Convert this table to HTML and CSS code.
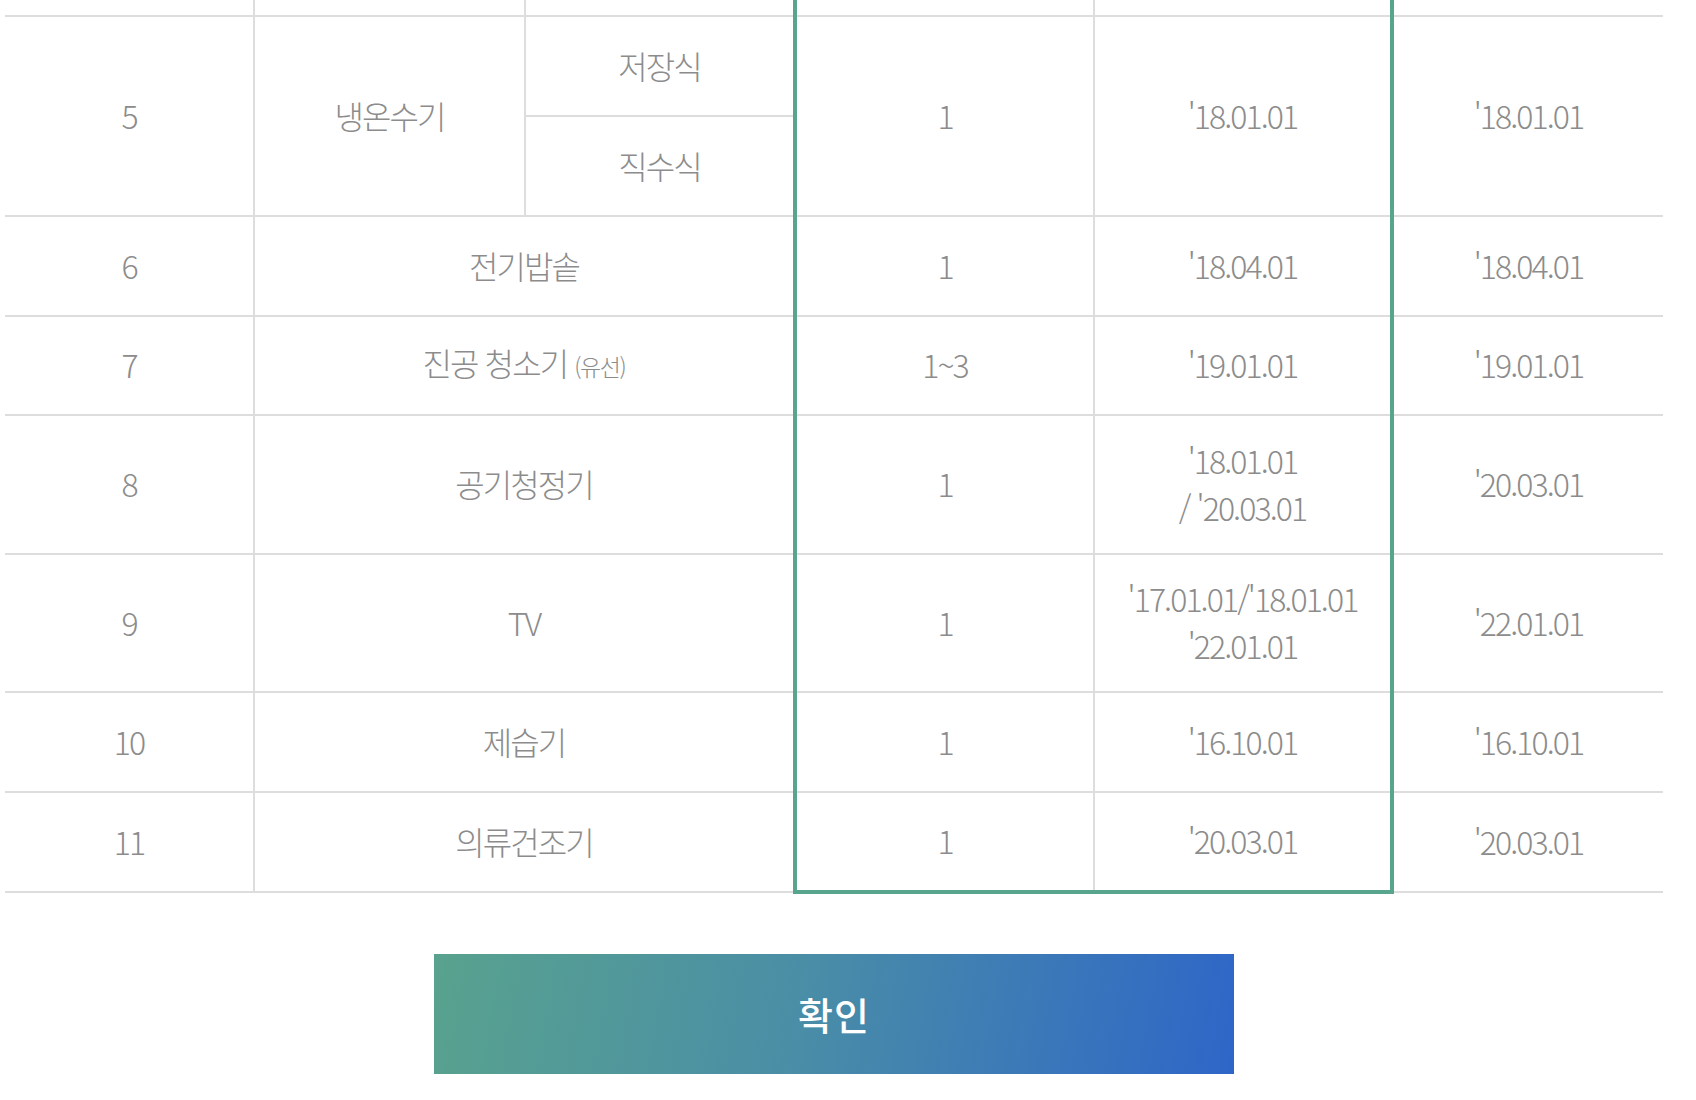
FILE: index.html
```html
<!DOCTYPE html>
<html lang="ko">
<head>
<meta charset="utf-8">
<title>가전제품 확인</title>
<link rel="stylesheet" href="styles.css">
</head>
<body>
<div class="page">
  <table class="spec">
    <colgroup>
      <col class="c-no"><col class="c-name"><col class="c-sub"><col class="c-qty"><col class="c-d1"><col class="c-d2">
    </colgroup>
    <tbody>
      <tr class="r-cut">
        <td class="first"></td><td></td><td></td><td class="qty"></td><td class="d1"></td><td class="last"></td>
      </tr>
      <tr class="r-100">
        <td class="first" rowspan="2">5</td>
        <td rowspan="2">냉온수기</td>
        <td>저장식</td>
        <td class="qty" rowspan="2">1</td>
        <td class="d1" rowspan="2">'18.01.01</td>
        <td class="last" rowspan="2">'18.01.01</td>
      </tr>
      <tr class="r-100">
        <td>직수식</td>
      </tr>
      <tr class="r-100">
        <td class="first">6</td>
        <td colspan="2">전기밥솥</td>
        <td class="qty">1</td>
        <td class="d1">'18.04.01</td>
        <td class="last">'18.04.01</td>
      </tr>
      <tr class="r-99">
        <td class="first">7</td>
        <td colspan="2">진공 청소기 <span class="small">(유선)</span></td>
        <td class="qty">1~3</td>
        <td class="d1">'19.01.01</td>
        <td class="last">'19.01.01</td>
      </tr>
      <tr class="r-139">
        <td class="first">8</td>
        <td colspan="2">공기청정기</td>
        <td class="qty">1</td>
        <td class="d1">'18.01.01<br>/ '20.03.01</td>
        <td class="last">'20.03.01</td>
      </tr>
      <tr class="r-138">
        <td class="first">9</td>
        <td colspan="2">TV</td>
        <td class="qty">1</td>
        <td class="d1">'17.01.01/'18.01.01<br>'22.01.01</td>
        <td class="last">'22.01.01</td>
      </tr>
      <tr class="r-100">
        <td class="first">10</td>
        <td colspan="2">제습기</td>
        <td class="qty">1</td>
        <td class="d1">'16.10.01</td>
        <td class="last">'16.10.01</td>
      </tr>
      <tr class="r-100 r-end">
        <td class="first">11</td>
        <td colspan="2">의류건조기</td>
        <td class="qty">1</td>
        <td class="d1">'20.03.01</td>
        <td class="last">'20.03.01</td>
      </tr>
    </tbody>
  </table>
  <button class="confirm" type="button">확인</button>
</div>
</body>
</html>
```
FILE: styles.css
```css
html, body {
  margin: 0;
  padding: 0;
  background: #fff;
}

.page {
  width: 1658px;
  margin-left: 5px;
  font-family: "Noto Sans CJK KR", "Noto Sans", sans-serif;
}

.spec {
  width: 100%;
  table-layout: fixed;
  border-collapse: collapse;
  border: none;
}

.c-no { width: 249px; }
.c-name { width: 271px; }
.c-sub { width: 270px; }
.c-qty { width: 299px; }
.c-d1 { width: 298px; }
.c-d2 { width: 271px; }

.spec td {
  border: 2px solid #dddddd;
  padding: 0 4px 2px;
  text-align: center;
  vertical-align: middle;
  font-size: 32px;
  font-weight: 300;
  line-height: 47px;
  letter-spacing: -0.06em;
  color: #8c8c8c;
  white-space: nowrap;
}

.spec td.first { border-left: none; }
.spec td.last { border-right: none; }

.spec td.qty { border-left: 4px solid #58a58d; }
.spec td.d1 { border-right: 4px solid #58a58d; }
.r-end td.qty,
.r-end td.d1 { border-bottom: 4px solid #58a58d; }

.r-cut td { border-top: none; height: 15px; padding: 0; }
.r-cut { height: 15px; }
.r-100 { height: 100px; }
.r-99 { height: 99px; }
.r-139 { height: 139px; }
.r-138 { height: 138px; }

.small {
  font-size: 23px;
  letter-spacing: -0.06em;
}

.confirm {
  display: flex;
  align-items: center;
  justify-content: center;
  width: 800px;
  height: 120px;
  margin: 60px auto 0;
  border: none;
  padding: 0 0 2px;
  background: linear-gradient(100deg, #58a28e 0%, #4a8ea6 45%, #2e66c8 100%);
  color: #ffffff;
  font-family: "Noto Sans CJK KR", "Noto Sans", sans-serif;
  font-size: 38px;
  font-weight: 500;
  letter-spacing: 1px;
  cursor: pointer;
}
```
